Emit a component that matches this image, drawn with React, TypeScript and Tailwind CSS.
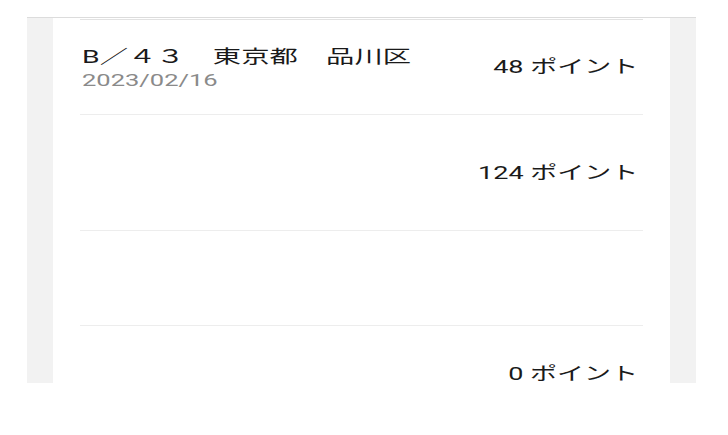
const rows = [
  { title: "B／４３　東京都　品川区", date: "2023/02/16", points: 48, h: "h-[95px]" },
  { title: "", date: "", points: 124, h: "h-[116px]" },
  { title: "", date: "", points: null, h: "h-[95px]" },
  { title: "", date: "", points: 0, h: "h-[96px]" },
];

export default function App() {
  return (
    <div
      className="w-[728px] h-[435px] bg-white pt-[17px] overflow-hidden"
      style={{ fontFamily: '"Roboto", "Noto Sans CJK JP", sans-serif' }}
    >
      <div className="ml-[27px] mr-[32px] h-[366px] overflow-hidden border-t border-[#dcdcdc] bg-[#f2f2f2] px-[26px]">
        <div className="h-full bg-white px-[27px] pt-[1px]">
          {rows.map((r, i) => (
            <div
              key={i}
              className={`flex items-center justify-between border-t ${i === 0 ? "border-[#e2e2e2]" : "border-[#ededed]"} ${r.h}`}
            >
              <div className="flex flex-col pl-[2px]">
                {r.title && (
                  <span className="inline-block origin-left scale-x-[1.53] text-[18.5px] leading-[25px] text-[#1a1a1a] whitespace-nowrap">
                    {r.title}
                  </span>
                )}
                {r.date && (
                  <span className="inline-block origin-left scale-x-150 text-[17px] leading-[20px] text-[#8a8a8a]">
                    {r.date}
                  </span>
                )}
              </div>
              {r.points !== null && (
                <span className="inline-block origin-right scale-x-150 pr-[3px] text-[18px] leading-[24px] text-[#1a1a1a] whitespace-nowrap">
                  {r.points} ポイント
                </span>
              )}
            </div>
          ))}
        </div>
      </div>
    </div>
  );
}
